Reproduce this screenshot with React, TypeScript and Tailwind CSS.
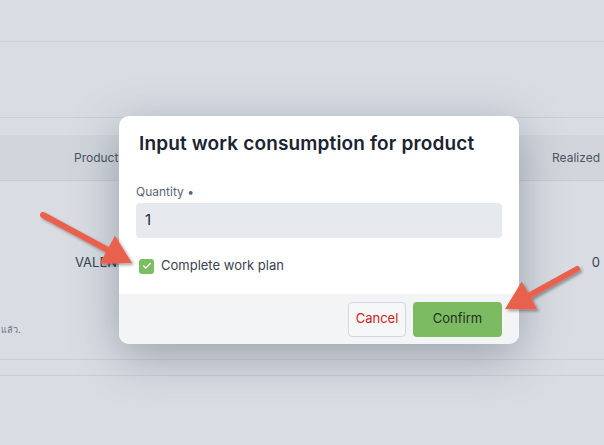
import { Check } from "lucide-react";

function Arrow({ x1, y1, x2, y2 }: { x1: number; y1: number; x2: number; y2: number }) {
  const dx = x2 - x1;
  const dy = y2 - y1;
  const len = Math.hypot(dx, dy);
  const ux = dx / len;
  const uy = dy / len;
  const head = 28;
  const half = 16;
  const bx = x2 - ux * head;
  const by = y2 - uy * head;
  const p1 = `${bx - uy * half},${by + ux * half}`;
  const p2 = `${bx + uy * half},${by - ux * half}`;
  return (
    <g>
      <line x1={x1} y1={y1} x2={bx + ux * 2} y2={by + uy * 2} stroke="#e9604d" strokeWidth={6} strokeLinecap="round" />
      <polygon points={`${x2},${y2} ${p1} ${p2}`} fill="#e9604d" strokeLinejoin="round" />
    </g>
  );
}

export default function App() {
  return (
    <div className="relative w-[604px] h-[445px] overflow-hidden bg-[#d9dde3] font-['Inter',sans-serif]">
      {/* page under the overlay */}
      <div className="flex flex-col">
        <div className="h-[42px] border-b border-[#cbcfd5]" />
        <div className="h-[76px] border-b border-[#cbcfd5]" />
        <div className="h-[17px]" />
        <div className="h-[46px] flex items-center bg-[#d2d6dc] border-b border-[#c9cdd3] text-[12px] text-[#4b5563]">
          <div className="pl-[74px]">Product</div>
          <div className="flex-1" />
          <div className="pr-[4px]">Realized</div>
        </div>
        <div className="h-[64px]" />
        <div className="flex items-center text-[13px] text-[#374151] h-[36px]">
          <div className="pl-[75px]">VALEN</div>
          <div className="flex-1" />
          <div className="pr-[4px]">0</div>
        </div>
        <div className="h-[42px]" />
        <div className="h-[14px] pl-[1px] flex items-center">
          <span className="text-[9px] text-[#6b7280] whitespace-nowrap">แล้ว.</span>
        </div>
        <div className="h-[22px]" />
        <div className="h-[17px] border-y border-[#cbcfd5]" />
      </div>

      {/* modal */}
      <div className="absolute left-[119px] top-[116px] w-[400px] rounded-[10px] bg-white overflow-hidden shadow-[0_12px_48px_rgba(40,50,70,0.35)]">
        <div className="px-[17px] pt-[16px] pb-[18px]">
          <h2 className="pl-[3px] text-[19px] font-semibold text-[#1a2233] leading-[24px] tracking-[0.15px]">
            Input work consumption for product
          </h2>
          <div className="mt-[29px] text-[12px] text-[#5b6474] leading-[14px]">Quantity •</div>
          <div className="mt-[4px] h-[35px] rounded-[4px] bg-[#e6e9ee] flex items-center px-[9px] text-[15px] text-[#1f2937]">
            1
          </div>
          <label className="mt-[18px] h-[20px] flex items-center gap-[7px] pl-[3px]">
            <span className="w-[15px] h-[15px] rounded-[3px] bg-[#7cbd62] flex items-center justify-center">
              <Check size={10} strokeWidth={3} color="#ffffff" />
            </span>
            <span className="text-[13px] text-[#3a4150]">Complete work plan</span>
          </label>
        </div>
        <div className="bg-[#f3f4f6] h-[50px] flex items-center justify-end gap-[7px] pr-[17px]">
          <button className="h-[35px] w-[58px] rounded-[4px] border border-[#d4d7dc] bg-[#f6f7f8] text-[13px] text-[#cc1f1a]">
            Cancel
          </button>
          <button className="h-[35px] w-[89px] rounded-[4px] bg-[#7dbb63] text-[13px] text-[#243024]">
            Confirm
          </button>
        </div>
      </div>

      {/* annotation arrows */}
      <svg className="absolute inset-0" width={604} height={445} viewBox="0 0 604 445">
        <defs>
          <filter id="sh" x="-20%" y="-20%" width="140%" height="140%">
            <feDropShadow dx="2" dy="2" stdDeviation="1.5" floodColor="#000" floodOpacity="0.35" />
          </filter>
        </defs>
        <g filter="url(#sh)">
          <Arrow x1={43} y1={215} x2={132} y2={263} />
          <Arrow x1={577} y1={269} x2={505} y2={309} />
        </g>
      </svg>
    </div>
  );
}
